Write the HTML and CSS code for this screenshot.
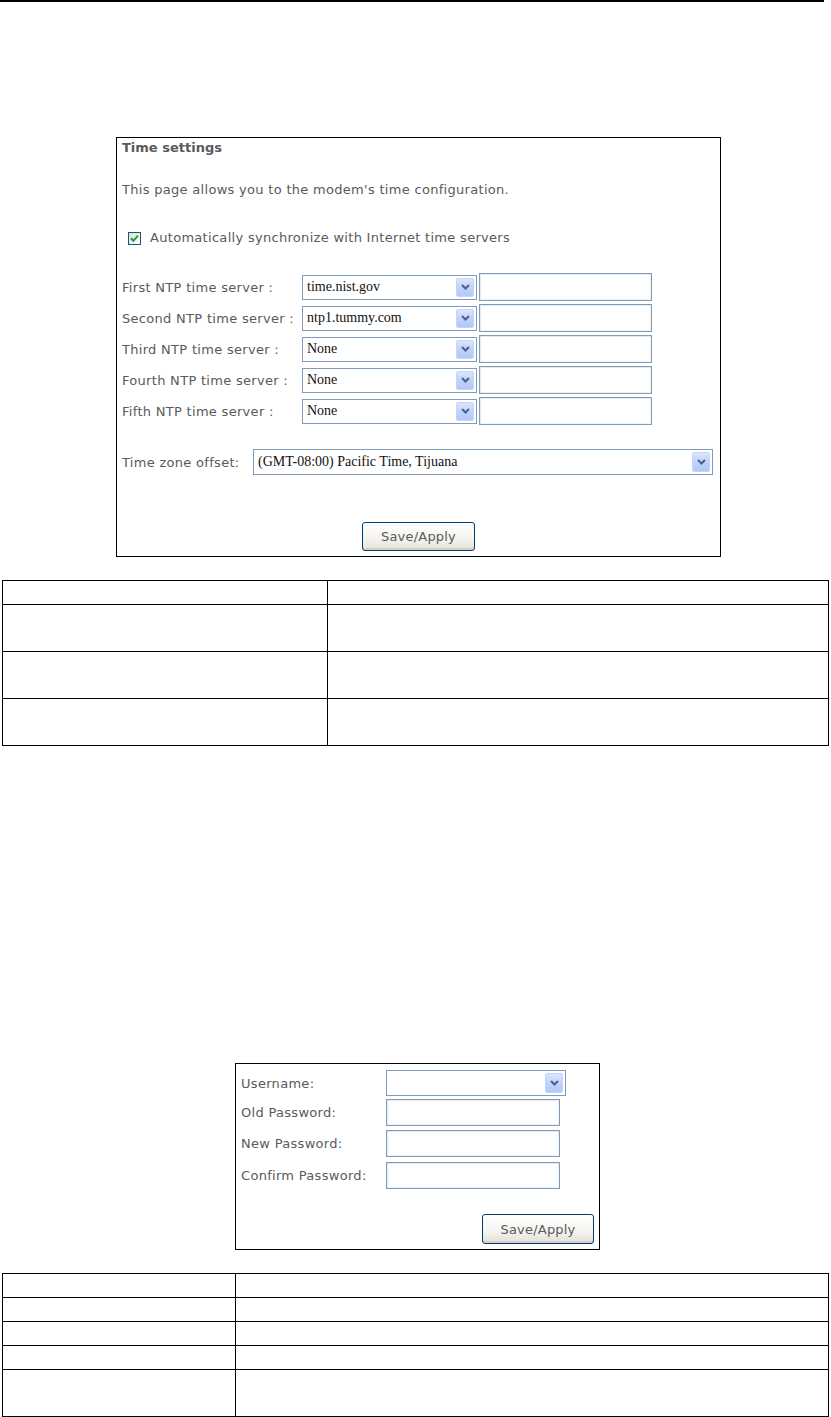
FILE: index.html
```html
<!DOCTYPE html>
<html>
<head>
<meta charset="utf-8">
<link rel="stylesheet" href="styles.css">
</head>
<body>
<div class="rule"></div>

<section class="panel time">
  <div class="title">Time settings</div>
  <p class="desc">This page allows you to the modem's time configuration.</p>
  <div class="check">
    <span class="cb"><svg width="9" height="9" viewBox="0 0 9 9"><path d="M1 4.2 L3.4 6.8 L8 1.6" fill="none" stroke="#21a121" stroke-width="2"/></svg></span>
    <span>Automatically synchronize with Internet time servers</span>
  </div>
  <div class="ntp">
    <div class="row">
      <span class="lbl">First NTP time server :</span>
      <div class="sel s175"><span class="val">time.nist.gov</span><span class="arr"><svg width="9" height="6" viewBox="0 0 9 6"><path d="M1 1 L4.5 4.5 L8 1" fill="none" stroke="#4d6185" stroke-width="2"/></svg></span></div>
      <div class="inp i173"></div>
    </div>
    <div class="row">
      <span class="lbl">Second NTP time server :</span>
      <div class="sel s175"><span class="val">ntp1.tummy.com</span><span class="arr"><svg width="9" height="6" viewBox="0 0 9 6"><path d="M1 1 L4.5 4.5 L8 1" fill="none" stroke="#4d6185" stroke-width="2"/></svg></span></div>
      <div class="inp i173"></div>
    </div>
    <div class="row">
      <span class="lbl">Third NTP time server :</span>
      <div class="sel s175"><span class="val">None</span><span class="arr"><svg width="9" height="6" viewBox="0 0 9 6"><path d="M1 1 L4.5 4.5 L8 1" fill="none" stroke="#4d6185" stroke-width="2"/></svg></span></div>
      <div class="inp i173"></div>
    </div>
    <div class="row">
      <span class="lbl">Fourth NTP time server :</span>
      <div class="sel s175"><span class="val">None</span><span class="arr"><svg width="9" height="6" viewBox="0 0 9 6"><path d="M1 1 L4.5 4.5 L8 1" fill="none" stroke="#4d6185" stroke-width="2"/></svg></span></div>
      <div class="inp i173"></div>
    </div>
    <div class="row">
      <span class="lbl">Fifth NTP time server :</span>
      <div class="sel s175"><span class="val">None</span><span class="arr"><svg width="9" height="6" viewBox="0 0 9 6"><path d="M1 1 L4.5 4.5 L8 1" fill="none" stroke="#4d6185" stroke-width="2"/></svg></span></div>
      <div class="inp i173"></div>
    </div>
  </div>
  <div class="tz">
    <span class="tzl">Time zone offset:</span>
    <div class="sel s460"><span class="val">(GMT-08:00) Pacific Time, Tijuana</span><span class="arr"><svg width="9" height="6" viewBox="0 0 9 6"><path d="M1 1 L4.5 4.5 L8 1" fill="none" stroke="#4d6185" stroke-width="2"/></svg></span></div>
  </div>
  <div class="actions center"><button class="btn b113">Save/Apply</button></div>
</section>

<table class="grid t1">
  <tr class="h24"><td class="c1"></td><td></td></tr>
  <tr class="h47"><td class="c1"></td><td></td></tr>
  <tr class="h47"><td class="c1"></td><td></td></tr>
  <tr class="h47"><td class="c1"></td><td></td></tr>
</table>

<section class="panel pw">
  <div class="prow">
    <span class="plbl">Username:</span>
    <div class="sel s180"><span class="val"></span><span class="arr"><svg width="9" height="6" viewBox="0 0 9 6"><path d="M1 1 L4.5 4.5 L8 1" fill="none" stroke="#4d6185" stroke-width="2"/></svg></span></div>
  </div>
  <div class="prow">
    <span class="plbl">Old Password:</span>
    <div class="inp i174"></div>
  </div>
  <div class="prow">
    <span class="plbl">New Password:</span>
    <div class="inp i174"></div>
  </div>
  <div class="prow">
    <span class="plbl">Confirm Password:</span>
    <div class="inp i174"></div>
  </div>
  <div class="actions right"><button class="btn b112">Save/Apply</button></div>
</section>

<table class="grid t2">
  <tr class="h24"><td class="c1"></td><td></td></tr>
  <tr class="h24"><td class="c1"></td><td></td></tr>
  <tr class="h24"><td class="c1"></td><td></td></tr>
  <tr class="h24"><td class="c1"></td><td></td></tr>
  <tr class="h47"><td class="c1"></td><td></td></tr>
</table>
</body>
</html>
```
FILE: styles.css
```css
* { box-sizing: border-box; }
html, body { margin: 0; padding: 0; background: #fff; }
body {
  font-family: "DejaVu Sans", Verdana, sans-serif;
  font-size: 13px;
  letter-spacing: 0.3px;
  color: #5a5a5a;
  width: 831px;
}
.rule {
  height: 2px;
  width: 824px;
  background: #000;
}

.panel {
  border: 1px solid #000;
  background: #fff;
}
.time {
  margin: 135px 0 0 116px;
  width: 605px;
  height: 420px;
  padding: 2px 0 0 5px;
}
.title {
  font-weight: bold;
  letter-spacing: 0;
  line-height: 16px;
  height: 16px;
}
.desc {
  margin: 26px 0 0 0;
  line-height: 16px;
}
.check {
  margin: 32px 0 0 6px;
  display: flex;
  align-items: center;
  gap: 9px;
  line-height: 16px;
}
.cb {
  width: 13px;
  height: 13px;
  border: 1px solid #1c5180;
  background: linear-gradient(135deg, #dcdcd7, #fff);
  display: flex;
  align-items: center;
  justify-content: center;
}
.cb svg { display: block; }

.ntp {
  margin-top: 27px;
  display: flex;
  flex-direction: column;
  gap: 3px;
}
.row {
  display: flex;
  align-items: center;
  height: 28px;
}
.lbl {
  width: 180px;
  white-space: nowrap;
}

.sel {
  display: flex;
  align-items: center;
  justify-content: space-between;
  border: 1px solid #7f9db9;
  background: #fff;
  padding: 2px;
  font-family: "Liberation Serif", "Times New Roman", serif;
  font-size: 14px;
  letter-spacing: 0;
  color: #111;
}
.sel .val { padding-left: 2px; white-space: nowrap; }
.arr {
  width: 18px;
  height: 100%;
  border: 1px solid #c3d3fd;
  border-radius: 2px;
  background: linear-gradient(180deg, #dbe5fd 0%, #c0d2fc 50%, #b4c9f8 100%);
  display: flex;
  align-items: center;
  justify-content: center;
}
.arr svg { display: block; }
.s175 { width: 175px; height: 25px; }
.s460 { width: 460px; height: 26px; }
.s180 { width: 180px; height: 26px; }

.inp {
  border: 1px solid #7f9db9;
  box-shadow: inset 1px 1px 0 #e4e9f0, inset -1px -1px 0 #eef1f5;
  background: #fff;
}
.i173 { width: 173px; height: 28px; margin-left: 2px; }
.i174 { width: 174px; height: 27px; }

.tz {
  margin-top: 24px;
  display: flex;
  align-items: center;
  height: 26px;
}
.tzl { width: 131px; white-space: nowrap; }

.actions { display: flex; }
.actions.center { justify-content: center; margin-top: 47px; padding-right: 5px; }
.actions.right { justify-content: flex-end; margin-top: 25px; padding-right: 5px; }

.btn {
  font-family: "DejaVu Sans", Verdana, sans-serif;
  font-size: 13px;
  letter-spacing: 0.2px;
  color: #5a5a5a;
  border: 1px solid #003c74;
  border-radius: 3px;
  background: linear-gradient(180deg, #ffffff 0%, #f4f3ee 60%, #e3e1d6 100%);
  box-shadow: inset 0 -2px 0 #d6d0c5;
  padding: 0;
}
.b113 { width: 113px; height: 29px; }
.b112 { width: 112px; height: 30px; }

.grid {
  border-collapse: collapse;
  table-layout: fixed;
  margin-left: 2px;
  width: 827px;
}
.grid td {
  border: 1px solid #000;
  padding: 0;
}
.t1 { margin-top: 23px; }
.t1 .c1 { width: 325px; }
.t2 { margin-top: 23px; }
.t2 .c1 { width: 233px; }
.h24 { height: 24px; }
.h47 { height: 47px; }

.pw {
  margin: 317px 0 0 235px;
  width: 365px;
  height: 187px;
  padding: 6px 0 0 5px;
}
.prow {
  display: flex;
  align-items: center;
  height: 27px;
  margin-bottom: 4px;
}
.prow:first-child { height: 26px; margin-bottom: 3px; }
.prow:nth-child(3) { margin-bottom: 5px; }
.plbl { width: 145px; white-space: nowrap; }
```
